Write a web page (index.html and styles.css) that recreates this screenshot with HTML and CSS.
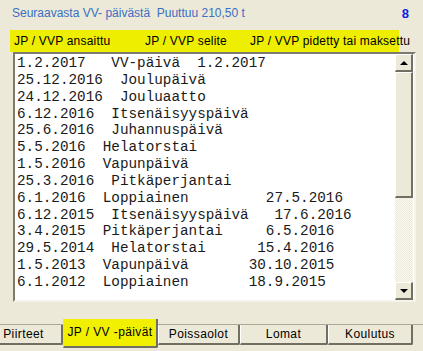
FILE: index.html
```html
<!DOCTYPE html>
<html lang="fi">
<head>
    <meta charset="UTF-8">
    <title>JP / VV -päivät</title>
    <link rel="stylesheet" href="styles.css">
</head>
<body>
    <div class="window">
        <div class="top-row">
            <span class="summary">Seuraavasta VV- päivästä&nbsp; Puuttuu 210,50 t</span>
            <span class="count">8</span>
        </div>

        <div class="list-header">
            <span>JP / VVP ansaittu</span>
            <span>JP / VVP selite</span>
            <span>JP / VVP pidetty tai maksettu</span>
        </div>

        <div class="list-box">
            <div class="list-rows">
                <div class="row">1.2.2017   VV-päivä  1.2.2017</div>
                <div class="row">25.12.2016  Joulupäivä</div>
                <div class="row">24.12.2016  Jouluaatto</div>
                <div class="row">6.12.2016  Itsenäisyyspäivä</div>
                <div class="row">25.6.2016  Juhannuspäivä</div>
                <div class="row">5.5.2016  Helatorstai</div>
                <div class="row">1.5.2016  Vapunpäivä</div>
                <div class="row">25.3.2016  Pitkäperjantai</div>
                <div class="row">6.1.2016  Loppiainen         27.5.2016</div>
                <div class="row">6.12.2015  Itsenäisyyspäivä   17.6.2016</div>
                <div class="row">3.4.2015  Pitkäperjantai     6.5.2016</div>
                <div class="row">29.5.2014  Helatorstai      15.4.2016</div>
                <div class="row">1.5.2013  Vapunpäivä       30.10.2015</div>
                <div class="row">6.1.2012  Loppiainen       18.9.2015</div>
            </div>
            <div class="scrollbar">
                <div class="sb-button"><span class="arrow-up"></span></div>
                <div class="sb-track">
                    <div class="sb-thumb"></div>
                </div>
                <div class="sb-button"><span class="arrow-down"></span></div>
            </div>
        </div>

        <div class="tabs">
            <div class="tab tab-first">Piirteet</div>
            <div class="tab tab-active">JP / VV -päivät</div>
            <div class="tab tab-poissa">Poissaolot</div>
            <div class="tab tab-lomat">Lomat</div>
            <div class="tab tab-koulutus">Koulutus</div>
        </div>
    </div>
</body>
</html>
```

FILE: styles.css
```css
body {
    margin: 0;
    background-color: #ECE9D8;
    font-family: 'Liberation Sans', Arial, sans-serif;
    font-size: 12px;
    color: #000;
}
.window {
    width: 423px;
    height: 351px;
    overflow: hidden;
}
.top-row {
    display: flex;
    justify-content: space-between;
    align-items: center;
    height: 26px;
    padding: 0 14px 0 12px;
}
.summary {
    color: #3a6fc4;
}
.count {
    color: #0a1ee8;
    font-weight: bold;
    font-size: 13px;
}
.list-header {
    display: grid;
    grid-template-columns: 131px 105px auto;
    align-items: center;
    margin-left: 10px;
    width: 389px;
    height: 22px;
    padding-left: 4px;
    box-sizing: border-box;
    margin-top: 4px;
    background-color: #eeee00;
    white-space: nowrap;
    letter-spacing: 0.2px;
}
.list-box {
    display: flex;
    margin-left: 13px;
    width: 403px;
    height: 250px;
    box-sizing: border-box;
    background-color: #fff;
    border-top: 2px solid #7d7a70;
    border-left: 2px solid #7d7a70;
    border-right: 2px solid #f4f3ee;
    border-bottom: 2px solid #f4f3ee;
}
.list-rows {
    flex: 1;
    padding: 1px 0 0 2px;
    font-family: 'Liberation Mono', 'Courier New', monospace;
    font-size: 14.3px;
    color: #1a1a1a;
}
.row {
    white-space: pre;
    height: 16.85px;
    line-height: 17px;
}
.scrollbar {
    display: flex;
    flex-direction: column;
    width: 18px;
    margin-right: 1px;
}
.sb-button {
    display: flex;
    align-items: center;
    justify-content: center;
    height: 18px;
    box-sizing: border-box;
    background-color: #ECE9D8;
    border-top: 1px solid #fff;
    border-left: 1px solid #fff;
    border-right: 2px solid #716f64;
    border-bottom: 2px solid #716f64;
}
.arrow-up {
    border-left: 4px solid transparent;
    border-right: 4px solid transparent;
    border-bottom: 4px solid #000;
}
.arrow-down {
    border-left: 4px solid transparent;
    border-right: 4px solid transparent;
    border-top: 4px solid #000;
}
.sb-track {
    flex: 1;
    background-color: #f5f4ef;
    background-image: repeating-conic-gradient(#ECE9D8 0 25%, #fbfaf7 0 50%);
    background-size: 2px 2px;
}
.sb-thumb {
    height: 126px;
    box-sizing: border-box;
    background-color: #ECE9D8;
    border-top: 1px solid #fff;
    border-left: 1px solid #fff;
    border-right: 2px solid #716f64;
    border-bottom: 2px solid #716f64;
}
.tabs {
    display: flex;
    margin-top: 22px;
    height: 21px;
    border-top: 1px solid #aca899;
    letter-spacing: 0.4px;
}
.tab {
    display: flex;
    align-items: center;
    justify-content: center;
    box-sizing: border-box;
    height: 20px;
    padding-bottom: 1px;
    border-right: 2px solid #716f64;
    border-bottom: 2px solid #716f64;
    border-left: 1px solid #fff;
    border-bottom-right-radius: 2px;
}
.tab-first {
    width: 78px;
    margin-left: -15px;
}
.tab-active {
    width: 95px;
    height: 29px;
    margin-top: -6px;
    background-color: #f0f000;
    border-left: 1px solid #f0f000;
    padding-bottom: 2px;
}
.tab-poissa {
    width: 82px;
}
.tab-lomat {
    width: 88px;
}
.tab-koulutus {
    width: 85px;
}
```
